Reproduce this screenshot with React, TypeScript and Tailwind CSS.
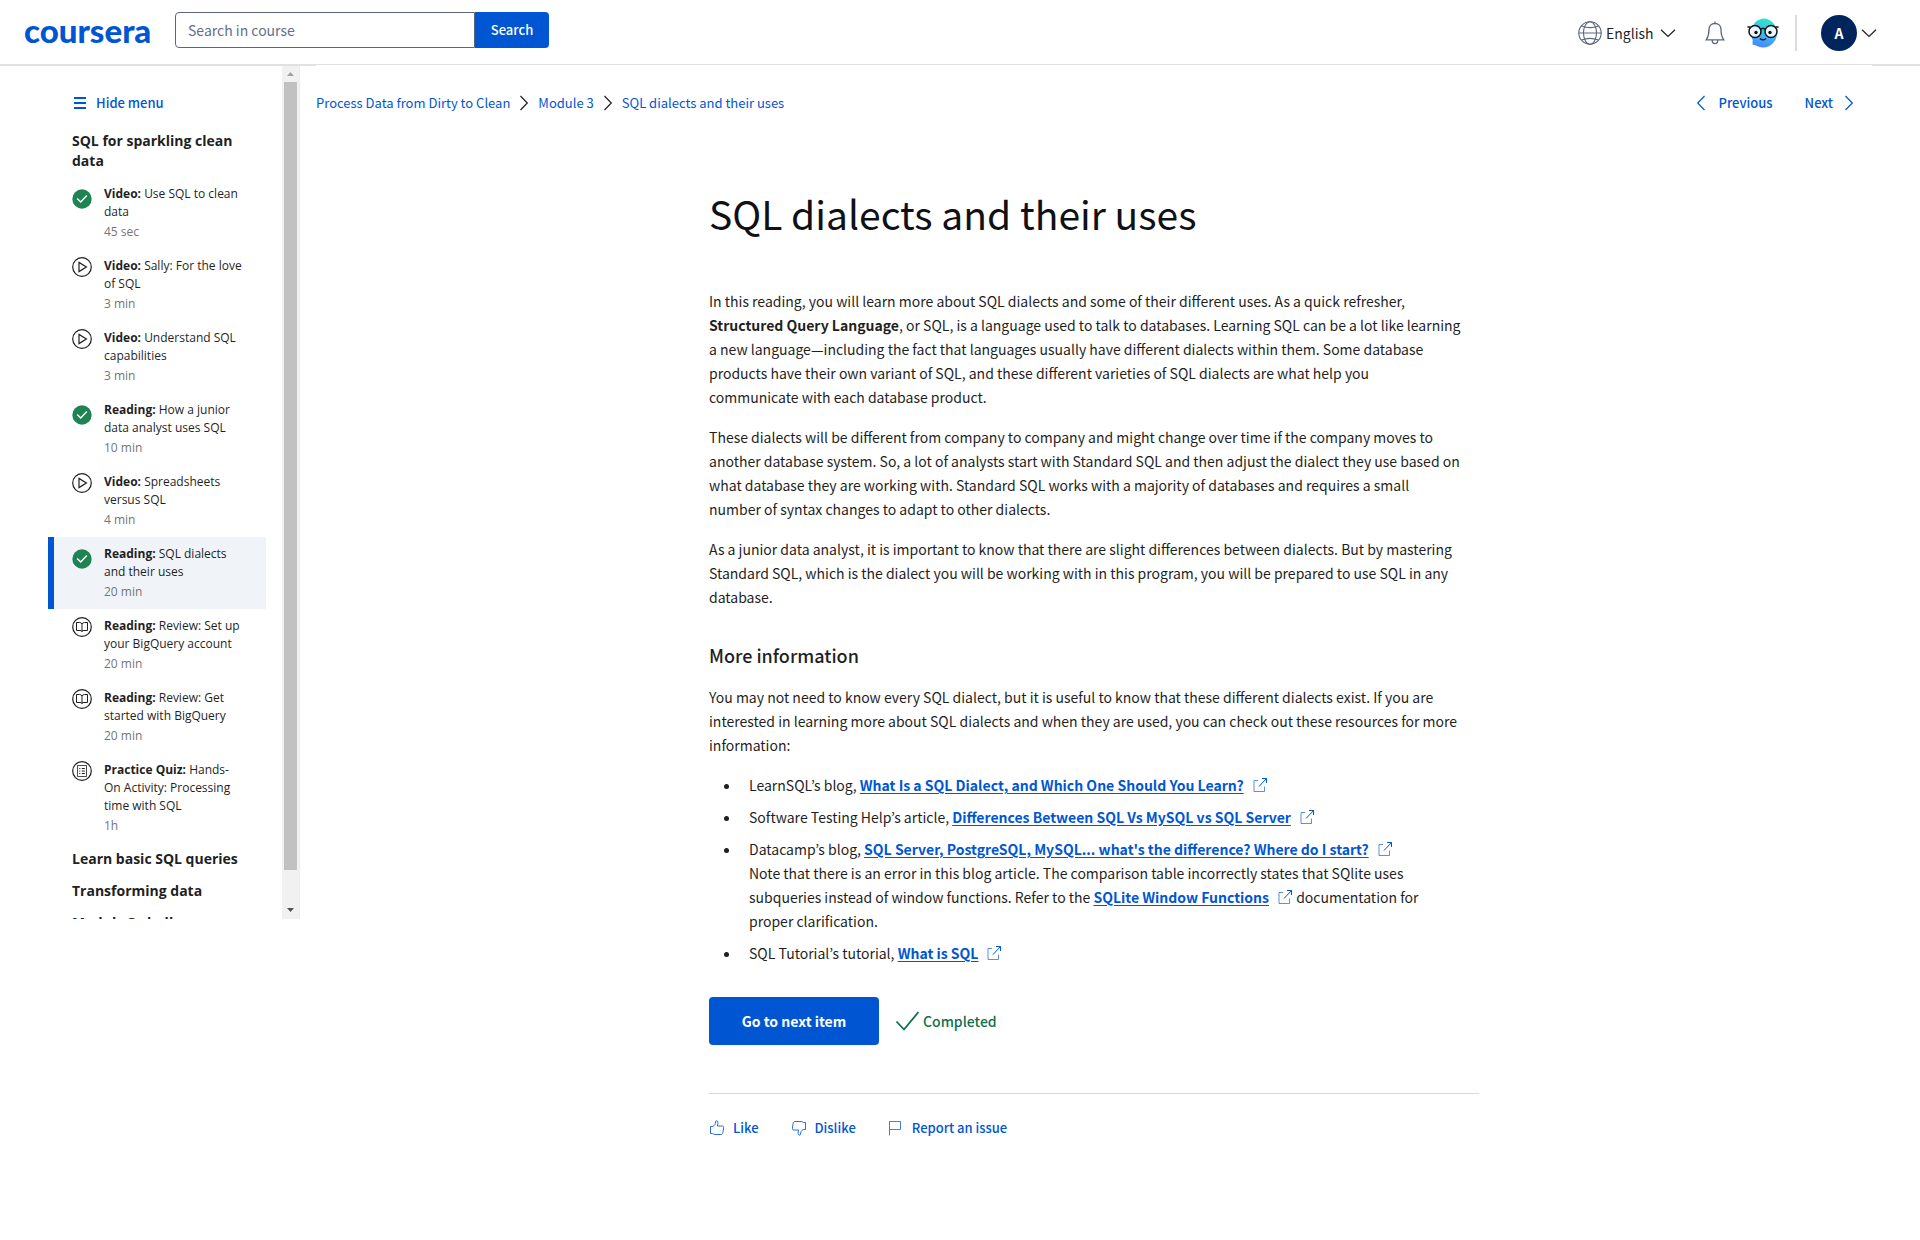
import React from "react";

type Kind = "done" | "video" | "reading" | "quiz";

type Lesson = {
  kind: Kind;
  label: string;
  title: string;
  time: string;
  active?: boolean;
};

const lessons: Lesson[] = [
  { kind: "done", label: "Video:", title: "Use SQL to clean data", time: "45 sec" },
  { kind: "video", label: "Video:", title: "Sally: For the love of SQL", time: "3 min" },
  { kind: "video", label: "Video:", title: "Understand SQL capabilities", time: "3 min" },
  { kind: "done", label: "Reading:", title: "How a junior data analyst uses SQL", time: "10 min" },
  { kind: "video", label: "Video:", title: "Spreadsheets versus SQL", time: "4 min" },
  { kind: "done", label: "Reading:", title: "SQL dialects and their uses", time: "20 min", active: true },
  { kind: "reading", label: "Reading:", title: "Review: Set up your BigQuery account", time: "20 min" },
  { kind: "reading", label: "Reading:", title: "Review: Get started with BigQuery", time: "20 min" },
  { kind: "quiz", label: "Practice Quiz:", title: "Hands-On Activity: Processing time with SQL", time: "1h" },
];

function LessonIcon({ kind }: { kind: Kind }) {
  if (kind === "done") {
    return (
      <svg className="mt-1 size-5 shrink-0" viewBox="0 0 20 20" fill="none" aria-hidden="true">
        <circle cx="10" cy="10" r="9.7" fill="#1f8354" />
        <path d="M5.2 9.6 8.7 13 14.8 6.4" stroke="#fff" strokeWidth="1.4" />
      </svg>
    );
  }
  return (
    <svg className="size-5 shrink-0" viewBox="0 0 20 20" fill="none" stroke="#1f1f1f" aria-hidden="true">
      <circle cx="10" cy="10" r="9.3" strokeWidth="1.2" />
      {kind === "video" && <path d="M7 5.4v9.2l7.4-4.6z" strokeWidth="1.2" />}
      {kind === "reading" && (
        <path d="M10 6.800C9.500 6.200 8.600 5.500 7.500 5.500h-3v8h3.500c1 0 1.500.3 2 1 .5-.7 1-1 2-1h3.500v-8h-3c-1.100 0-2 .7-2.500 1.300zm0 0v8" />
      )}
      {kind === "quiz" && (
        <>
          <path d="M5.500 4.500h9v11h-9z" strokeOpacity=".8" />
          <path d="M7.300 7.500h1M7.300 10h1M7.300 12.500h1M9.800 7.500h3M9.800 10h3M9.800 12.500h3" />
        </>
      )}
    </svg>
  );
}

function Chevron({ dir, className }: { dir: "left" | "right" | "down"; className: string }) {
  const paths = {
    left: "M11.500 1 4.700 8l6.800 7",
    right: "M4.500 1l6.800 7-6.800 7",
    down: "M1 4.700 8 11.500l7-6.800",
  };
  return (
    <svg className={className} viewBox="0 0 16 16" fill="none" stroke="currentColor" strokeWidth="1.2" aria-hidden="true">
      <path d={paths[dir]} />
    </svg>
  );
}

function ExternalIcon() {
  return (
    <svg className="ml-2 inline-block size-4 align-[-2px]" viewBox="0 0 16 16" fill="none" stroke="#0056d2" aria-hidden="true">
      <path d="M6 3.500H2v11h10.500v-5" strokeOpacity=".65" />
      <path d="M7 9.500 14.500 1.500M10 1.500h4.500V6" />
    </svg>
  );
}

function Resource({ children }: { children: React.ReactNode }) {
  return (
    <a href="#resource" className="font-bold text-[#0056d2]">
      <span className="underline underline-offset-2">{children}</span>
      <ExternalIcon />
    </a>
  );
}

function Coach() {
  return (
    <svg className="h-[30px] w-8" viewBox="0 0 32 30" fill="none" aria-hidden="true">
      <defs>
        <linearGradient id="coach" x1="20" y1="0" x2="12" y2="30" gradientUnits="userSpaceOnUse">
          <stop stopColor="#2ee6c8" />
          <stop offset=".5" stopColor="#3fbdf2" />
          <stop offset="1" stopColor="#4a80fb" />
        </linearGradient>
      </defs>
      <path d="M16 .5a14 14.500 0 1 1-7 27L5.500 26.500l.2-4.500A14 14.500 0 0 1 16 .5z" fill="url(#coach)" />
      <path d="M.5 9h3M28.500 9h3M14 11.500q2-2.500 4 0" stroke="#111" strokeWidth="1.700" />
      <circle cx="8" cy="13.500" r="6" fill="#fff" fillOpacity=".88" stroke="#111" strokeWidth="1.500" />
      <circle cx="24" cy="13.500" r="6" fill="#fff" fillOpacity=".88" stroke="#111" strokeWidth="1.500" />
      <circle cx="9" cy="14.500" r="1.700" fill="#111" />
      <circle cx="23" cy="14.500" r="1.700" fill="#111" />
      <path d="M13 20.500q3 2.800 6 0" stroke="#111" strokeWidth="1.200" />
    </svg>
  );
}

function ThumbIcon({ className }: { className: string }) {
  return (
    <svg className={className} viewBox="0 0 16 16" fill="none" stroke="currentColor" aria-hidden="true">
      <path d="M1.500 6.500h2.300C5.500 5.500 6.500 4 6.700 1.300c.1-.8 2-.6 2.200.7.200 1.300-.1 2.600-.6 4h5.200c1.200 0 1.300 1.200.9 1.900.4.700.2 1.600-.2 2.100.2.800 0 1.500-.4 1.900.2 1.300-.4 2.600-1.600 2.600H6c-1 0-1.700-.6-2.500-1h-2z" strokeOpacity=".85" />
    </svg>
  );
}

function Header() {
  return (
    <header className="flex h-[66px] items-start border-b-2 border-[#e1e1e1] bg-white pl-6 pr-[43px]">
      <a href="#home" className="mt-2 h-9 w-[151px] font-['Lato'] text-[33px] font-black leading-[44px] text-[#0056d2]">
        coursera
      </a>
      <form className="mt-3 flex h-9" onSubmit={(e) => e.preventDefault()}>
        <input
          type="text"
          aria-label="Search in course"
          placeholder="Search in course"
          className="w-[300px] rounded-l border border-[#5b6780] px-3 text-sm outline-none placeholder:text-[#636f87]"
        />
        <button type="submit" className="w-[74px] rounded-r bg-[#0056d2] text-[13px] font-medium text-white">
          Search
        </button>
      </form>
      <div className="ml-auto flex h-[66px] items-center">
        <svg className="size-6" viewBox="0 0 24 24" fill="none" stroke="#5b6780" strokeWidth="1.100" aria-hidden="true">
          <circle cx="12" cy="12" r="11.200" />
          <ellipse cx="12" cy="12" rx="6.500" ry="11.200" />
          <path d="M.8 12h22.400M3.500 5q8.500 3.200 17 0M3.500 19q8.500-3.200 17 0" />
        </svg>
        <div className="relative ml-1 flex items-center text-[#1f1f1f]">
          <select aria-label="Language" className="w-[70px] appearance-none bg-transparent text-sm outline-none">
            <option>English</option>
          </select>
          <Chevron dir="down" className="pointer-events-none absolute right-0 size-4" />
        </div>
        <button type="button" aria-label="Notifications" className="ml-[29px]">
          <svg className="h-6 w-5" viewBox="0 0 20 24" fill="none" stroke="#5b6780" strokeWidth="1.300" aria-hidden="true">
            <path d="M10 .5v2M10 2.500c-3.800 0-6 2.600-6 6 0 6.500-1.200 8-2.800 10.300h17.600C17.200 16.500 16 15 16 8.500c0-3.400-2.200-6-6-6zM7.200 19c0 2.200 1 3.700 2.800 3.700s2.800-1.500 2.800-3.700" />
          </svg>
        </button>
        <button type="button" aria-label="Coach" className="ml-[22px]">
          <Coach />
        </button>
        <span className="ml-4 h-9 w-[2px] bg-[#dcdcdc]" />
        <button type="button" aria-label="Account menu" className="ml-6 flex items-center text-[#1f1f1f]">
          <span className="flex size-9 items-center justify-center rounded-full bg-[#00255d] text-sm font-bold text-white">
            A
          </span>
          <Chevron dir="down" className="ml-1 size-4" />
        </button>
      </div>
    </header>
  );
}

function Sidebar() {
  return (
    <aside className="flex h-[853px] w-[300px] shrink-0 overflow-hidden">
      <nav className="flex-1 pl-12 pr-4 font-['Open_Sans',sans-serif]" aria-label="Course">
        <button
          type="button"
          className="mt-[27px] flex h-5 items-center gap-[10px] pl-[26px] font-['Noto_Sans_CJK_KR',sans-serif] text-[13px] font-medium text-[#0056d2]"
        >
          <svg className="size-3" viewBox="0 0 12 12" stroke="currentColor" strokeWidth="2" aria-hidden="true">
            <path d="M0 1h12M0 6h12M0 11h12" />
          </svg>
          Hide menu
        </button>
        <h2 className="mt-3 py-[6px] pl-6 text-sm font-bold leading-5 text-[#1f1f1f]">SQL for sparkling clean data</h2>
        <ul>
          {lessons.map((l) => (
            <li key={l.title}>
              <a
                href="#lesson"
                className={
                  l.active
                    ? "flex gap-3 border-l-6 border-[#0056d2] bg-[#f0f4f9] py-2 pl-[18px] pr-[22px]"
                    : "flex gap-3 border-l-6 border-transparent py-2 pl-[18px] pr-[22px]"
                }
              >
                <LessonIcon kind={l.kind} />
                <span className="flex flex-col gap-[2px] text-xs leading-[18px] text-[#1f1f1f]">
                  <span>
                    <strong className="font-bold">{l.label}</strong> {l.title}
                  </span>
                  <span className="text-[#757575]">{l.time}</span>
                </span>
              </a>
            </li>
          ))}
        </ul>
        {["Learn basic SQL queries", "Transforming data", "Module 3 challenge"].map((t) => (
          <h2 key={t} className="py-[6px] pl-6 text-sm font-bold leading-5 text-[#1f1f1f]">
            {t}
          </h2>
        ))}
      </nav>
      <div className="flex w-[18px] flex-col items-center border-r border-[#e8eaf2] bg-[#f1f1f1]" aria-hidden="true">
        <svg className="h-[16px] w-[17px]" viewBox="0 0 17 16" fill="#a3a3a3">
          <path d="M5 10h7L8.500 6z" />
        </svg>
        <span className="w-[13px] flex-1 bg-[#c1c1c1]" />
        <svg className="mt-8 h-[17px] w-[17px]" viewBox="0 0 17 17" fill="#505050">
          <path d="M5 6h7l-3.500 4z" />
        </svg>
      </div>
    </aside>
  );
}

function Article() {
  return (
    <article className="mx-auto w-full max-w-[770px] text-sm leading-6 text-[#1f1f1f]">
      <h1 className="mt-[42px] text-[39px] leading-[60px] text-[#0f1114]">SQL dialects and their uses</h1>
      <div className="mt-[46px] flex max-w-[754px] flex-col gap-4">
        <p>
          In this reading, you will learn more about SQL dialects and some of their different uses. As a quick
          refresher, <strong className="font-bold">Structured Query Language</strong>, or SQL, is a language used to
          talk to databases. Learning SQL can be a lot like learning a new language—including the fact that languages
          usually have different dialects within them. Some database products have their own variant of SQL, and these
          different varieties of SQL dialects are what help you
          <br /> communicate with each database product.
        </p>
        <p>
          These dialects will be different from company to company and might change over time if the company moves to
          another database system. So, a lot of analysts start with Standard SQL and then adjust the dialect they use
          based on what database they are working with. Standard SQL works with a majority of databases and requires a
          small number of syntax changes to adapt to other dialects.
        </p>
        <p>
          As a junior data analyst, it is important to know that there are slight differences between dialects. But by
          mastering Standard SQL, which is the dialect you will be working with in this program, you will be prepared
          to use SQL in any database.
        </p>
        <h2 className="mt-4 text-lg font-medium leading-7">More information</h2>
        <p>
          You may not need to know every SQL dialect, but it is useful to know that these different dialects exist. If
          you are interested in learning more about SQL dialects and when they are used, you can check out these
          resources for more information:
        </p>
        <ul className="flex list-disc flex-col gap-2 pl-8">
          <li className="pl-2">
            LearnSQL’s blog, <Resource>What Is a SQL Dialect, and Which One Should You Learn?</Resource>
          </li>
          <li className="pl-2">
            Software Testing Help’s article, <Resource>Differences Between SQL Vs MySQL vs SQL Server</Resource>
          </li>
          <li className="pl-2">
            Datacamp’s blog, <Resource>SQL Server, PostgreSQL, MySQL... what's the difference? Where do I start?</Resource>
            <br />
            Note that there is an error in this blog article. The comparison table incorrectly states that SQlite uses
            subqueries instead of window functions. Refer to the <Resource>SQLite Window Functions</Resource>{" "}
            documentation for proper clarification.
          </li>
          <li className="pl-2">
            SQL Tutorial’s tutorial, <Resource>What is SQL</Resource>
          </li>
        </ul>
      </div>
      <div className="mt-8 flex h-12 items-center">
        <button type="button" className="h-12 w-[170px] rounded bg-[#0056d2] font-bold text-white">
          Go to next item
        </button>
        <svg className="ml-4 size-6" viewBox="0 0 24 24" fill="none" stroke="#0f6e4b" strokeWidth="1.800" aria-hidden="true">
          <path d="M1.500 12.500 9 20.500 23.500 3" />
        </svg>
        <span className="ml-1 font-medium text-[#126e4c]">Completed</span>
      </div>
      <hr className="mt-12 border-[#d9d9d9]" />
      <div className="mt-6 flex gap-8 text-[13px] font-medium leading-5 text-[#0056d2]">
        <button type="button" className="flex items-center gap-2">
          <ThumbIcon className="size-4" />
          Like
        </button>
        <button type="button" className="flex items-center gap-2">
          <ThumbIcon className="size-4 rotate-180" />
          Dislike
        </button>
        <button type="button" className="flex items-center gap-2">
          <svg className="size-4" viewBox="0 0 16 16" fill="none" stroke="currentColor" aria-hidden="true">
            <path d="M1.500 15.500v-14h11v8h-11" strokeOpacity=".75" />
          </svg>
          Report an issue
        </button>
      </div>
    </article>
  );
}

export default function App() {
  return (
    <div className="min-h-screen bg-white font-['Noto_Sans_CJK_KR',sans-serif] text-[#1f1f1f]">
      <Header />
      <div className="flex items-start">
        <Sidebar />
        <main className="ml-4 mr-12 -mt-px flex-1 bg-white">
          <div className="flex h-[76px] items-center justify-between text-[13px] text-[#0056d2]">
            <nav aria-label="Breadcrumb" className="flex items-center">
              <a href="#course">Process Data from Dirty to Clean</a>
              <Chevron dir="right" className="mx-[6px] size-4 text-[#1f1f1f]" />
              <a href="#module">Module 3</a>
              <Chevron dir="right" className="mx-[6px] size-4 text-[#1f1f1f]" />
              <a href="#item">SQL dialects and their uses</a>
            </nav>
            <nav aria-label="Items" className="mr-[15px] flex gap-8 font-medium">
              <a href="#previous" className="flex items-center gap-[10px]">
                <Chevron dir="left" className="size-4" />
                Previous
              </a>
              <a href="#next" className="flex items-center gap-2">
                Next
                <Chevron dir="right" className="size-4" />
              </a>
            </nav>
          </div>
          <Article />
        </main>
      </div>
    </div>
  );
}
